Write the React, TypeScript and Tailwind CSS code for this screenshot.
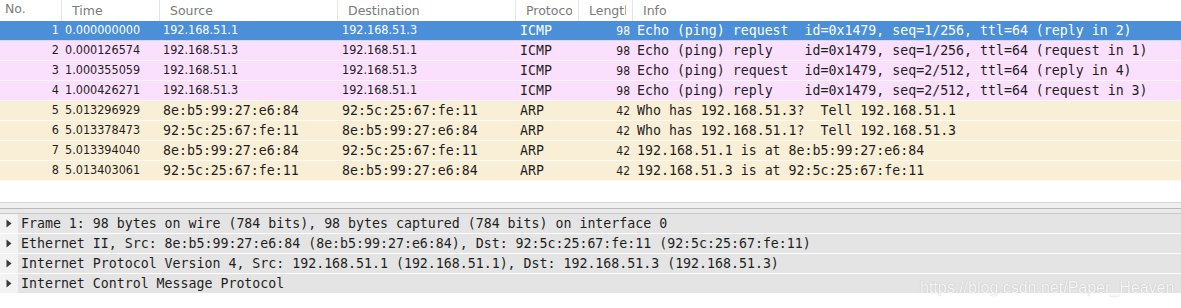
import React from "react";

const SANS = { fontFamily: "'DejaVu Sans Condensed', 'DejaVu Sans', sans-serif", fontStretch: "condensed" as const };
const HEAD = { fontFamily: "'DejaVu Sans', sans-serif" };
const MONO = { fontFamily: "'DejaVu Sans Mono', monospace" };

type Row = {
  no: number;
  time: string;
  src: string;
  dst: string;
  proto: string;
  len: string;
  info: string;
  kind: "sel" | "icmp" | "arp";
  mac: boolean;
};

const rows: Row[] = [
  { no: 1, time: "0.000000000", src: "192.168.51.1", dst: "192.168.51.3", proto: "ICMP", len: "98", info: "Echo (ping) request  id=0x1479, seq=1/256, ttl=64 (reply in 2)", kind: "sel", mac: false },
  { no: 2, time: "0.000126574", src: "192.168.51.3", dst: "192.168.51.1", proto: "ICMP", len: "98", info: "Echo (ping) reply    id=0x1479, seq=1/256, ttl=64 (request in 1)", kind: "icmp", mac: false },
  { no: 3, time: "1.000355059", src: "192.168.51.1", dst: "192.168.51.3", proto: "ICMP", len: "98", info: "Echo (ping) request  id=0x1479, seq=2/512, ttl=64 (reply in 4)", kind: "icmp", mac: false },
  { no: 4, time: "1.000426271", src: "192.168.51.3", dst: "192.168.51.1", proto: "ICMP", len: "98", info: "Echo (ping) reply    id=0x1479, seq=2/512, ttl=64 (request in 3)", kind: "icmp", mac: false },
  { no: 5, time: "5.013296929", src: "8e:b5:99:27:e6:84", dst: "92:5c:25:67:fe:11", proto: "ARP", len: "42", info: "Who has 192.168.51.3?  Tell 192.168.51.1", kind: "arp", mac: true },
  { no: 6, time: "5.013378473", src: "92:5c:25:67:fe:11", dst: "8e:b5:99:27:e6:84", proto: "ARP", len: "42", info: "Who has 192.168.51.1?  Tell 192.168.51.3", kind: "arp", mac: true },
  { no: 7, time: "5.013394040", src: "8e:b5:99:27:e6:84", dst: "92:5c:25:67:fe:11", proto: "ARP", len: "42", info: "192.168.51.1 is at 8e:b5:99:27:e6:84", kind: "arp", mac: true },
  { no: 8, time: "5.013403061", src: "92:5c:25:67:fe:11", dst: "8e:b5:99:27:e6:84", proto: "ARP", len: "42", info: "192.168.51.3 is at 92:5c:25:67:fe:11", kind: "arp", mac: true },
];

const details = [
  "Frame 1: 98 bytes on wire (784 bits), 98 bytes captured (784 bits) on interface 0",
  "Ethernet II, Src: 8e:b5:99:27:e6:84 (8e:b5:99:27:e6:84), Dst: 92:5c:25:67:fe:11 (92:5c:25:67:fe:11)",
  "Internet Protocol Version 4, Src: 192.168.51.1 (192.168.51.1), Dst: 192.168.51.3 (192.168.51.3)",
  "Internet Control Message Protocol",
];

function HeadCell({ w, label, last }: { w: string; label: string; last?: boolean }) {
  return (
    <div className={`${w} h-full shrink-0 pl-[10px] pr-[6px] pb-[3px] ${last ? "" : "border-r border-[#e4e4e4]"} flex items-center`}>
      <div className="overflow-hidden whitespace-nowrap">
        <span style={HEAD} className="text-[12.5px] text-[#7a7a7a]">{label}</span>
      </div>
    </div>
  );
}

function Triangle() {
  return (
    <svg width="6" height="9" viewBox="0 0 6 9" className="block">
      <path d="M0.5 0.5 L5.5 4.5 L0.5 8.5 Z" fill="#3a3a3a" />
    </svg>
  );
}

export default function App() {
  return (
    <div className="relative w-[1181px] h-[308px] bg-white overflow-hidden">
      {/* header */}
      <div className="flex h-[21px] bg-white">
        <div className="w-[62px] h-full shrink-0 border-r border-[#e4e4e4] flex items-center pl-[5px] pb-[3px]">
          <span style={HEAD} className="text-[12.5px] text-[#7a7a7a]">No.</span>
        </div>
        <HeadCell w="w-[98px]" label="Time" />
        <HeadCell w="w-[178px]" label="Source" />
        <HeadCell w="w-[178px]" label="Destination" />
        <HeadCell w="w-[63px]" label="Protocol" />
        <HeadCell w="w-[54px]" label="Length" />
        <HeadCell w="flex-1" label="Info" last />
      </div>

      {/* packet list */}
      <div className="flex flex-col">
        {rows.map((r) => {
          const bg = r.kind === "sel" ? "bg-[#4a8fd8]" : r.kind === "icmp" ? "bg-[#fbe0fd]" : "bg-[#f9efd6]";
          const fg = r.kind === "sel" ? "text-white" : "text-[#1e1e1e]";
          return (
            <div key={r.no} className={`flex h-[20px] items-center border-b border-white/70 ${bg} ${fg} whitespace-nowrap`}>
              <div style={SANS} className="w-[62px] shrink-0 text-right pr-[3px] text-[12.5px]">{r.no}</div>
              <div style={SANS} className="w-[98px] shrink-0 pl-[3px] text-[12.5px]">{r.time}</div>
              <div style={r.mac ? MONO : SANS} className={`w-[178px] shrink-0 pl-[3px] ${r.mac ? "text-[13.25px]" : "text-[12.5px]"}`}>{r.src}</div>
              <div style={r.mac ? MONO : SANS} className={`w-[178px] shrink-0 pl-[4px] ${r.mac ? "text-[13.25px]" : "text-[12.5px]"}`}>{r.dst}</div>
              <div style={MONO} className="w-[63px] shrink-0 pl-[4px] text-[13.25px]">{r.proto}</div>
              <div style={SANS} className="w-[54px] shrink-0 text-right pr-[3px] text-[12px]">{r.len}</div>
              <div style={MONO} className="flex-1 pl-[4px] text-[13.25px] whitespace-pre">{r.info}</div>
            </div>
          );
        })}
      </div>

      {/* empty area */}
      <div className="h-[21px] bg-white" />

      {/* splitter */}
      <div className="h-[6px] bg-[#efefef] border-t border-[#d6d6d6]" />
      <div className="h-[5px] bg-[#e9e9e9] border-t border-[#b9b9b9]" />

      {/* details pane */}
      <div className="flex flex-col border-t border-[#c8c8c8]">
        {details.map((d, i) => (
          <div key={i} className="flex h-[20px] border-b border-white">
            <div className="w-[18px] shrink-0 flex items-center justify-center bg-[#f3f3f3]">
              <Triangle />
            </div>
            <div style={MONO} className="flex-1 bg-[#e4e4e4] flex items-center pl-[3px] text-[13.25px] text-[#1e1e1e] whitespace-pre">
              {d}
            </div>
          </div>
        ))}
      </div>

      {/* watermark */}
      <div
        className="absolute left-[920px] top-[276px] text-[16px] text-[#f7f7f7] whitespace-nowrap"
        style={{ fontFamily: "'Liberation Sans', Arial, sans-serif", textShadow: "0 0 1px rgba(120,120,120,0.5)" }}
      >
        https://blog.csdn.net/Paper_Heaven
      </div>
    </div>
  );
}
